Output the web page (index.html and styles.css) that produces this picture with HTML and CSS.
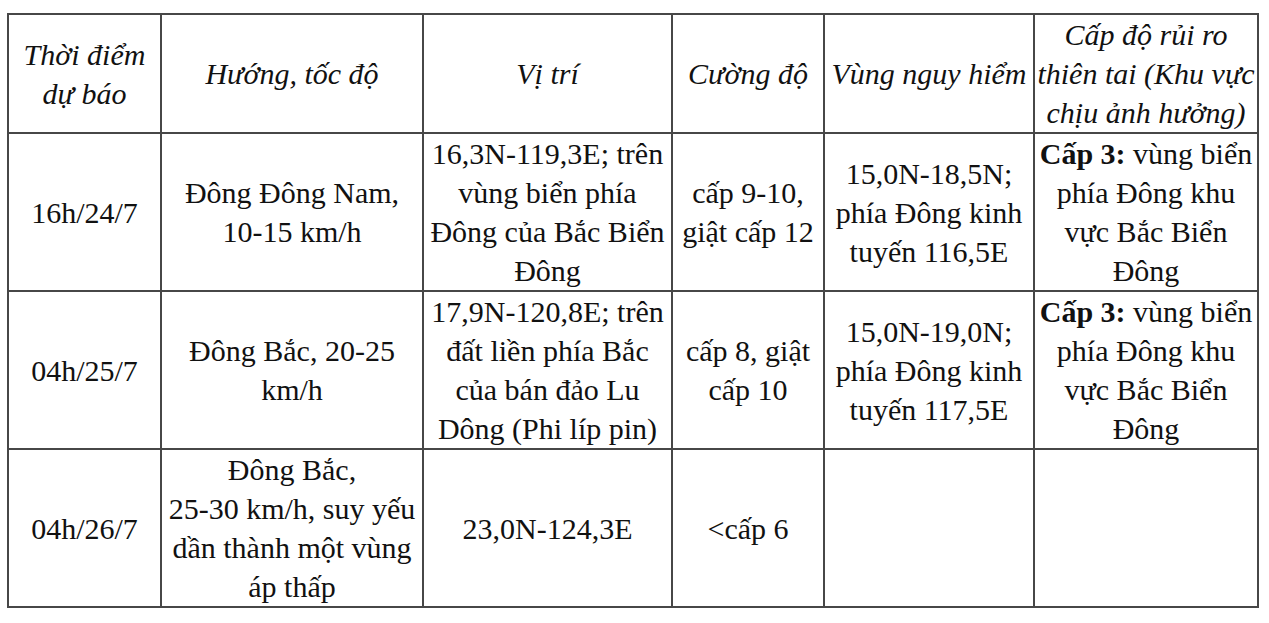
FILE: index.html
```html
<!DOCTYPE html>
<html lang="vi">
<head>
<meta charset="utf-8">
<title>Dự báo bão</title>
<link rel="stylesheet" href="styles.css">
</head>
<body>
<div class="wrap">
<table class="forecast">
  <colgroup>
    <col class="c1">
    <col class="c2">
    <col class="c3">
    <col class="c4">
    <col class="c5">
    <col class="c6">
  </colgroup>
  <thead>
    <tr>
      <th>Thời điểm dự báo</th>
      <th>Hướng, tốc độ</th>
      <th>Vị trí</th>
      <th>Cường độ</th>
      <th>Vùng nguy hiểm</th>
      <th>Cấp độ rủi ro thiên tai (Khu vực chịu ảnh hưởng)</th>
    </tr>
  </thead>
  <tbody>
    <tr>
      <td>16h/24/7</td>
      <td>Đông Đông Nam,<br>10-15 km/h</td>
      <td>16,3N-119,3E; trên vùng biển phía Đông của Bắc Biển Đông</td>
      <td>cấp 9-10, giật cấp 12</td>
      <td>15,0N-18,5N; phía Đông kinh tuyến 116,5E</td>
      <td><b>Cấp 3:</b> vùng biển phía Đông khu vực Bắc Biển Đông</td>
    </tr>
    <tr>
      <td>04h/25/7</td>
      <td>Đông Bắc, 20-25 km/h</td>
      <td>17,9N-120,8E; trên đất liền phía Bắc của bán đảo Lu Dông (Phi líp pin)</td>
      <td>cấp 8, giật cấp 10</td>
      <td>15,0N-19,0N; phía Đông kinh tuyến 117,5E</td>
      <td><b>Cấp 3:</b> vùng biển phía Đông khu vực Bắc Biển Đông</td>
    </tr>
    <tr>
      <td>04h/26/7</td>
      <td>Đông Bắc,<br>25-30 km/h, suy yếu dần thành một vùng áp thấp</td>
      <td>23,0N-124,3E</td>
      <td>&lt;cấp 6</td>
      <td></td>
      <td></td>
    </tr>
  </tbody>
</table>
</div>
</body>
</html>
```
FILE: styles.css
```css
html, body {
  margin: 0;
  padding: 0;
  background: #ffffff;
}
.wrap {
  padding: 13px 0 0 7px;
}
.forecast {
  border-collapse: collapse;
  table-layout: fixed;
  width: 1250px;
  font-family: "Liberation Serif", "Times New Roman", serif;
  font-size: 30px;
  line-height: 39px;
  color: #111111;
}
.c1 { width: 153px; }
.c2 { width: 262px; }
.c3 { width: 249px; }
.c4 { width: 152px; }
.c5 { width: 210px; }
.c6 { width: 224px; }
.forecast th,
.forecast td {
  border: 2px solid #474747;
  padding: 0 2px;
  text-align: center;
  vertical-align: middle;
}
.forecast th {
  font-weight: normal;
  font-style: italic;
}
.forecast b {
  font-weight: bold;
}
```
